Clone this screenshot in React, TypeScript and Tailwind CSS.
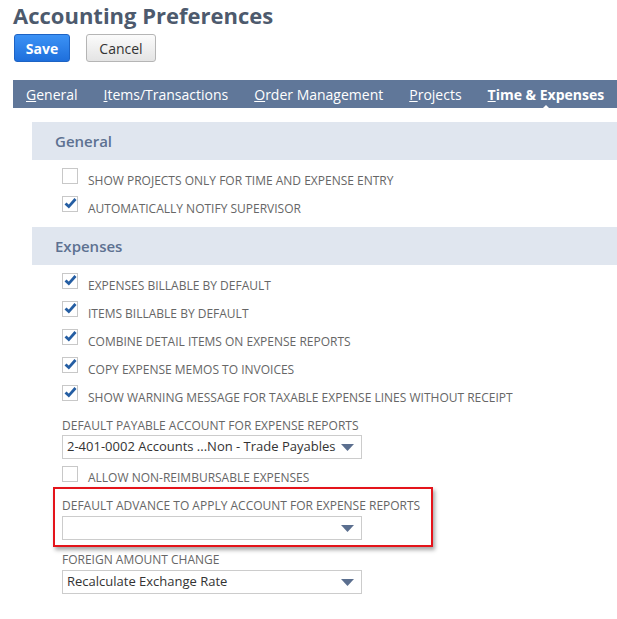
import React from "react";

const Check = ({ checked }: { checked: boolean }) => (
  <div className="relative w-[16px] h-[16px] border border-[#c8c8c8] bg-white shrink-0">
    {checked && (
      <svg className="absolute left-[1px] top-[0px]" width="13" height="12" viewBox="0 0 13 12">
        <path d="M1.5 6.5 L4.8 9.6 L11.5 2" fill="none" stroke="#255ea3" strokeWidth="2.8" strokeLinejoin="miter" />
      </svg>
    )}
  </div>
);

const Row = ({ checked, label }: { checked: boolean; label: string }) => (
  <div className="h-[28px] flex items-start pl-[30px]">
    <div className="mt-[4px]">
      <Check checked={checked} />
    </div>
    <div className="ml-[10px] mt-[9px] leading-[16px] text-[12px] text-[#666666] uppercase">{label}</div>
  </div>
);

const Select = ({ value }: { value: string }) => (
  <div className="w-[300px] h-[24px] border border-[#cccccc] bg-white flex items-center pl-[4px] pr-[4px]">
    <span className="flex-1 text-[13px] text-[#333333] whitespace-nowrap overflow-hidden">{value}</span>
    <svg width="13" height="7" viewBox="0 0 13 7" className="mr-[3px]">
      <path d="M0 0 H13 L6.5 7 Z" fill="#5b6f8f" />
    </svg>
  </div>
);

const Header = ({ title }: { title: string }) => (
  <div className="h-[38px] bg-[#e0e6ef] flex items-center pl-[23px] text-[15px] text-[#5d7191] font-semibold">{title}</div>
);

export default function App() {
  return (
    <div className="w-[617px] h-[619px] bg-white overflow-hidden" style={{ fontFamily: '"Open Sans", sans-serif' }}>
      <div className="pl-[13px] h-[30px] leading-[30px] text-[22px] font-bold text-[#4d5a6d]">Accounting Preferences</div>
      <div className="flex gap-[16px] ml-[14px] mt-[4px]">
        <button className="w-[56px] h-[28px] rounded-[3px] border border-[#1d63c4] bg-gradient-to-b from-[#3c92f5] to-[#1e6fdc] text-white text-[14px] font-bold">
          Save
        </button>
        <button className="w-[70px] h-[28px] rounded-[3px] border border-[#b5b5b5] bg-gradient-to-b from-[#fbfbfb] to-[#e4e4e4] text-[#333333] text-[14px]">
          Cancel
        </button>
      </div>
      <div className="ml-[13px] mt-[18px] h-[28px] bg-[#607799] flex items-center pl-[13px] gap-[26px] text-white text-[14px]">
        <span><u>G</u>eneral</span>
        <span><u>I</u>tems/Transactions</span>
        <span><u>O</u>rder Management</span>
        <span><u>P</u>rojects</span>
        <span className="relative font-bold">
          <u>T</u>ime &amp; Expenses
          <span className="absolute left-1/2 -translate-x-1/2 top-[21px] w-0 h-0 border-l-[7px] border-r-[7px] border-b-[7px] border-l-transparent border-r-transparent border-b-white" />
        </span>
      </div>
      <div className="ml-[32px] mt-[14px]">
        <Header title="General" />
        <div className="pt-[4px] pb-[7px]">
          <Row checked={false} label="Show projects only for time and expense entry" />
          <Row checked={true} label="Automatically notify supervisor" />
        </div>
        <Header title="Expenses" />
        <div className="pt-[4px]">
          <Row checked={true} label="Expenses billable by default" />
          <Row checked={true} label="Items billable by default" />
          <Row checked={true} label="Combine detail items on expense reports" />
          <Row checked={true} label="Copy expense memos to invoices" />
          <Row checked={true} label="Show warning message for taxable expense lines without receipt" />
        </div>
        <div className="pl-[30px]">
          <div className="mt-[9px] leading-[16px] text-[12px] text-[#666666] uppercase">Default payable account for expense reports</div>
          <div className="mt-[1px]">
            <Select value="2-401-0002 Accounts ...Non - Trade Payables" />
          </div>
        </div>
        <div className="h-[24px] flex items-start pl-[30px] mt-[4px]">
          <div className="mt-[3px]">
            <Check checked={false} />
          </div>
          <div className="ml-[10px] mt-[7px] leading-[16px] text-[12px] text-[#666666] uppercase">Allow non-reimbursable expenses</div>
        </div>
        <div className="ml-[21px] w-[380px] h-[60px] border-2 border-[#e4141b] shadow-[2px_3px_4px_rgba(0,0,0,0.35)] pl-[7px] pt-[9px]">
          <div className="leading-[16px] text-[12px] text-[#666666] uppercase">Default advance to apply account for expense reports</div>
          <div className="mt-[2px]">
            <Select value="" />
          </div>
        </div>
        <div className="pl-[30px]">
          <div className="mt-[5px] leading-[16px] text-[12px] text-[#666666] uppercase">Foreign amount change</div>
          <div className="mt-[2px]">
            <Select value="Recalculate Exchange Rate" />
          </div>
        </div>
      </div>
    </div>
  );
}
